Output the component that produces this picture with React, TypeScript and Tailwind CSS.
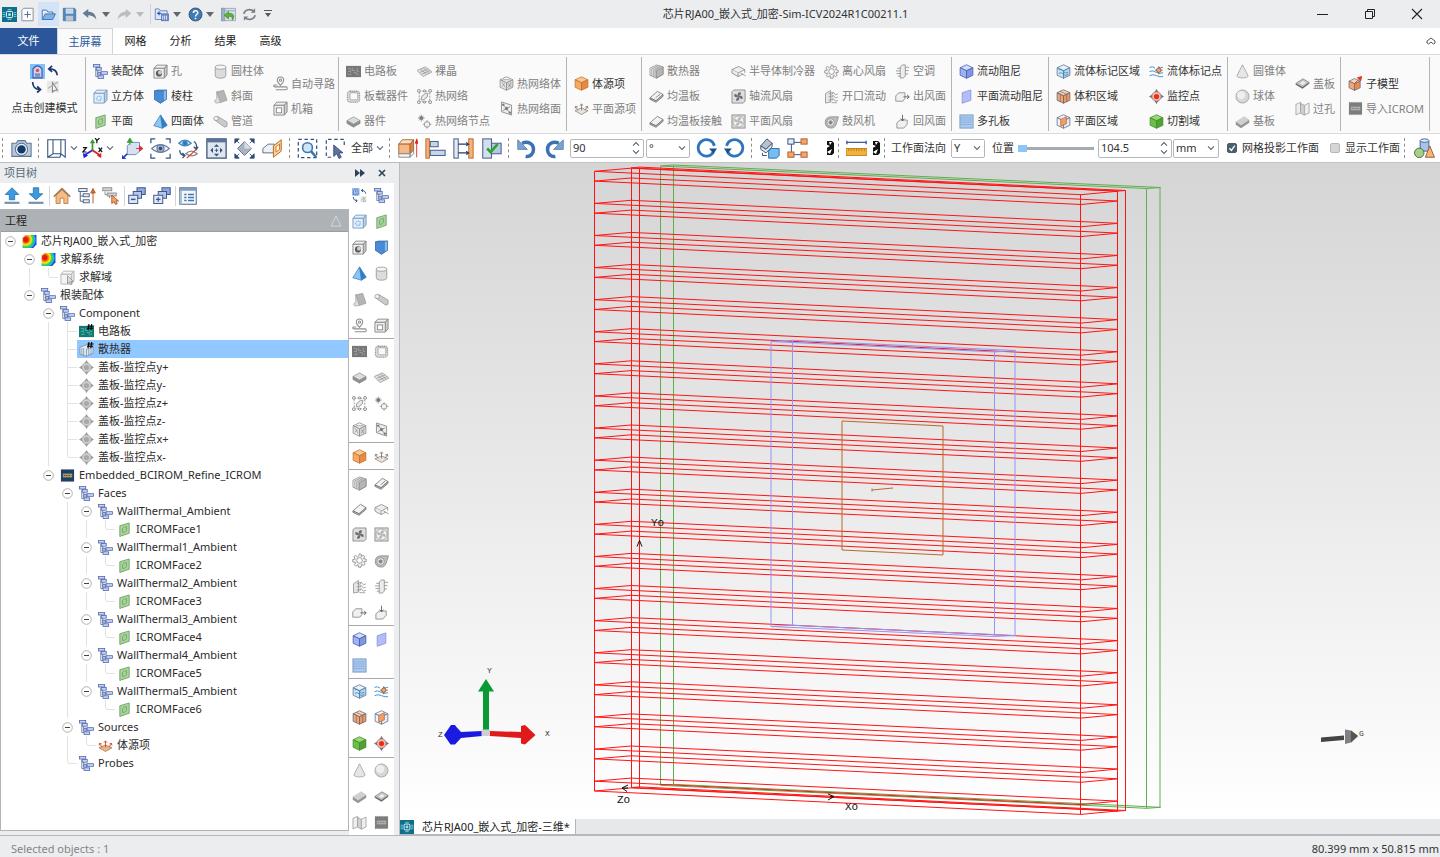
import React, { useState } from 'react';

// ---------------------------------------------------------------------------
// Icons
// ---------------------------------------------------------------------------

const GREY = '#8c8c8c';
const NAVY = '#33507f';

const cube = (top: string, left: string, right: string, stroke: string) => (
  <g stroke={stroke} strokeWidth="0.8" strokeLinejoin="round">
    <path d="M8 .8 14.8 4 8 7.2 1.2 4Z" fill={top} />
    <path d="M1.2 4 8 7.2V15.2L1.2 12Z" fill={left} />
    <path d="M14.8 4 8 7.2V15.2L14.8 12Z" fill={right} />
  </g>
);

const boxOutline = (stroke: string, face: string, side: string) => (
  <g stroke={stroke} strokeWidth="1" strokeLinejoin="round">
    <path d="M1 4.6 4 1.2H15L12 4.6Z" fill={face} />
    <path d="M12 4.6 15 1.2V11.6L12 15Z" fill={side} />
    <rect x="1" y="4.6" width="11" height="10.4" fill={face} />
  </g>
);

const assembly = (fill: string, stroke: string) => (
  <g>
    <path d="M3 4V13.4H7M5 6V8.8H9" fill="none" stroke="#6f7f9d" />
    <g fill={fill} stroke={stroke} strokeWidth="0.8">
      <rect x=".6" y=".6" width="6.6" height="2.6" />
      <rect x="3.4" y="3.8" width="5.4" height="2.8" />
      <rect x="8.6" y="8.2" width="6.8" height="2.8" />
      <rect x="4.8" y="9.4" width="3.4" height="2.4" />
      <rect x="5.4" y="12.6" width="6" height="2.8" />
    </g>
  </g>
);

const contour = (
  <g>
    <defs>
      <radialGradient id="contourFill" gradientUnits="userSpaceOnUse" cx="4" cy="6" r="12">
        <stop offset="0.18" stopColor="#e01b10" />
        <stop offset="0.34" stopColor="#f58a12" />
        <stop offset="0.48" stopColor="#f5ee1c" />
        <stop offset="0.64" stopColor="#35d63c" />
        <stop offset="0.8" stopColor="#18b4ea" />
        <stop offset="0.95" stopColor="#1738e0" />
      </radialGradient>
    </defs>
    <path d="M.6 4 4 1H15.4V11L12 15H.6Z" fill="url(#contourFill)" />
  </g>
);

const slab = (top: string, side: string) => (
  <g stroke={GREY} strokeWidth=".7" strokeLinejoin="round">
    <path d="M1 7 8 3 15 7 8 11Z" fill={top} />
    <path d="M1 7V10L8 14V11ZM15 7V10L8 14V11Z" fill={side} />
  </g>
);

const tiltedPlate = (
  <g stroke="#777" strokeWidth=".9" strokeLinejoin="round">
    <path d="M1 9.5 9 2.5 15 6 7.5 12.5Z" fill="#f3f3f3" />
    <path d="M1 9.5V11L7.5 14.2 15 7.8V6L7.5 12.5Z" fill="#b9b9b9" />
  </g>
);

const probe = (fill: string, dot: string, stroke: string) => (
  <g>
    <path d="M8 0 10.4 4H5.6ZM8 16 5.6 12H10.4ZM0 8 4 5.6V10.4ZM16 8 12 10.4V5.6Z" fill={stroke} />
    <circle cx="8" cy="8" r="5" fill={fill} stroke={stroke} strokeWidth=".8" />
    <circle cx="8" cy="8" r="2.8" fill={dot} />
  </g>
);

const fan = (
  <g fill="#6d6d6d">
    <path d="M8 8C6 5 8 3 10.5 3.6 11 5.4 9.6 6.6 8 8ZM8 8C11 6 13 8 12.4 10.5 10.6 11 9.4 9.6 8 8ZM8 8C10 11 8 13 5.5 12.4 5 10.6 6.4 9.4 8 8ZM8 8C5 10 3 8 3.6 5.5 5.4 5 6.6 6.4 8 8Z" />
  </g>
);

const chip = (bg: string, trace: string) => (
  <g>
    <rect x="0" y="2" width="16" height="12" fill={bg} />
    <path d="M2 5H5V8H2M7 4V7H10M12 4V8H14M2 11H6M8 9H11V12M13 10V12M5 9V10" fill="none" stroke={trace} strokeWidth=".8" />
  </g>
);

const romChip = (bg: string, label: string) => (
  <g>
    <rect x="1" y="1.5" width="14" height="13" fill={bg} />
    <path d="M1 1.5H15M1 14.5H15" stroke="#999" strokeDasharray="1 1" />
    <rect x="3" y="6" width="10" height="4" fill={label} />
    <path d="M4 8H12" stroke={bg} strokeDasharray="1.5 1" />
  </g>
);

const createMode = (
  <g>
    <rect x="0" y="0" width="8" height="8" fill="#7ec0fb" />
    <path d="M1.6 2.6Q4-.6 6.4 2.6V7.4H1.6Z" fill="#c9d3f2" stroke="#3f55a5" strokeWidth=".6" />
    <path d="M2.6 5.4H5.4M2.6 6.4H5.4" stroke="#3f55a5" strokeWidth=".5" />
    <circle cx="4" cy="3.4" r=".9" fill="#e14b42" />
    <path d="M14.5 6C14.4 3.8 12.8 2.6 10.2 2.6M11.8 1 10 2.6 11.8 4.2" fill="none" stroke="#173a70" strokeWidth=".9" />
    <path d="M1.4 9.6C1.4 12 2.8 13.6 5.2 13.6M3.8 12 5.6 13.6 3.8 15.2" fill="none" stroke="#173a70" strokeWidth=".9" />
    <path d="M9 9H15.4V15.2H9Z" fill="#e8e8e8" />
    <path d="M12 10V15L13 14H14.6Z" fill="#fff" stroke="#888" strokeWidth=".6" />
    <path d="M9.6 13 14.8 9.6" stroke="#aaa" strokeWidth=".6" />
  </g>
);

const source = (fill: string, arrow: string) => (
  <g>
    <path d="M1 10.4 8 7.4 15 10.4 8 14.4Z" fill={fill} stroke="#8a6a50" strokeWidth=".7" />
    <path d="M8 10V3.6M4.4 10 1.6 6M11.6 10 14.4 6M6.4 5 8 3 9.6 5M1.2 8 1.6 5.6 4 6.4M14.8 8 14.4 5.6 12 6.4" fill="none" stroke={arrow} strokeWidth=".9" />
  </g>
);

const ICONS: Record<string, React.ReactNode> = {
  assembly: assembly('#c3d2f6', '#4a62a8'),
  cuboid: (
    <g>
      {boxOutline('#7d9cc2', '#e2eefa', '#b9d2ec')}
      <path d="M4 9Q6 7 8.6 8V12H5Q3.4 11 4 9Z" fill="none" stroke="#3d8bd0" strokeWidth=".8" strokeDasharray="1.5 .8" />
    </g>
  ),
  plane: (
    <g>
      <path d="M3 4 13 1V12L3 15.4Z" fill="#a9d39c" stroke="#6e9c62" strokeWidth=".9" />
      <path d="M6 7Q8 4 10 5V9Q8 12 6 11Z" fill="none" stroke="#62a656" strokeWidth=".9" />
    </g>
  ),
  hole: (
    <g>
      {boxOutline('#8a8a8a', '#f0f0f0', '#c6c6c6')}
      <circle cx="6.4" cy="10" r="3.3" fill="#5b5b5b" />
      <circle cx="7.4" cy="9.2" r="2.1" fill="#cfcfcf" />
    </g>
  ),
  prism: (
    <g stroke="#3b72b3" strokeWidth=".7" strokeLinejoin="round">
      <path d="M1.6 2 4.6 1H14.4V11L8 15.2 1.6 11Z" fill="#5f9fe0" />
      <path d="M1.6 2H11L14.4 1V11L11 13Z" fill="#8bbcf0" />
      <path d="M1.6 2H11V13L8 15.2 1.6 11Z" fill="#4a8bd6" />
    </g>
  ),
  tetra: (
    <g stroke="#2d72b5" strokeWidth=".7" strokeLinejoin="round">
      <path d="M8 1 15.2 12 10 15.2Z" fill="#2f7fca" />
      <path d="M8 1 .8 12.5 10 15.2Z" fill="#8cc6f2" />
    </g>
  ),
  cylinder: (
    <g stroke="#8e8e8e" strokeWidth=".8">
      <path d="M2.4 3.4V12.6C2.4 16 13.6 16 13.6 12.6V3.4Z" fill="#dcdcdc" />
      <ellipse cx="8" cy="3.4" rx="5.6" ry="2.2" fill="#f5f5f5" />
    </g>
  ),
  slope: (
    <g stroke="#999" strokeWidth=".7">
      <path d="M4 3 11.4 1.4 15 12 8 14.4Z" fill="#b5b5b5" />
      <path d="M4 3 8 14.4 3 15 1.6 13 4 10Z" fill="#dcdcdc" />
    </g>
  ),
  pipe: (
    <g stroke="#8d8d8d" strokeWidth=".7">
      <path d="M1.4 6 5 2.6 15 8.6V13L12.4 14Z" fill="#cbcbcb" />
      <ellipse cx="3.4" cy="4.8" rx="2.6" ry="2.2" fill="#f0f0f0" />
    </g>
  ),
  route: (
    <g fill="none" stroke="#8d8d8d" strokeWidth="1.1">
      <path d="M8 10C5 7 4.6 5.4 4.6 4.4A3.4 3.4 0 0 1 11.4 4.4C11.4 5.4 11 7 8 10Z" />
      <circle cx="8" cy="4.4" r="1.2" />
      <path d="M4.6 9.5H2Q.8 9.5.8 10.6 .8 11.6 2 11.6H14Q15.2 11.6 15.2 13 15.2 14.6 14 14.6H3" />
    </g>
  ),
  enclosure: (
    <g>
      {boxOutline('#8a8a8a', '#efefef', '#d0d0d0')}
      <rect x="3.6" y="7.4" width="5.6" height="5.2" fill="#fff" stroke="#8a8a8a" />
    </g>
  ),
  pcb: chip('#777777', '#a8a8a8'),
  pcbColor: (
    <g>
      {chip('#137a72', '#56c3b5')}
      <path d="M10.6 0 9.6 6.6M13.6 0 12.6 6.6M9 2.2H15.6M8.6 4.6H15" stroke="#000" strokeWidth="1.1" />
    </g>
  ),
  board: (
    <g fill="none" stroke="#9a9a9a">
      <rect x="1.6" y="2.4" width="12.8" height="11.6" rx="3" fill="#e4e4e4" strokeDasharray="1.4 .6" strokeWidth="1.4" />
      <rect x="4.2" y="4" width="8.4" height="7.6" rx="1" fill="#f9f9f9" strokeWidth=".9" />
    </g>
  ),
  device: slab('#dcdcdc', '#8f8f8f'),
  die: (
    <g stroke="#8d8d8d" strokeWidth=".7" fill="#e2e2e2">
      <path d="M0 7 9 3 16 8.6 6.4 13.4Z" />
      <path d="M3 9 12 5M4.6 11 14 7M3.6 5.4 10.4 11M6.6 4 13 10" fill="none" />
    </g>
  ),
  network: (
    <g fill="#e9e9e9" stroke="#7f7f7f" strokeWidth=".8">
      <rect x="2.4" y="2.4" width="11.2" height="11.2" strokeDasharray="2 1.2" fill="none" />
      <path d="M4.4 11.6 5 8 9 4.6H11.6L11 8.4 7 11.6Z" />
      <circle cx="2" cy="2" r="1.6" /><circle cx="14" cy="2" r="1.6" />
      <circle cx="2" cy="14" r="1.6" /><circle cx="14" cy="14" r="1.6" />
      <circle cx="8" cy="2" r="1.2" /><circle cx="8" cy="14" r="1.2" />
    </g>
  ),
  networkNode: (
    <g stroke="#7f7f7f" strokeWidth=".8" fill="none">
      <path d="M4.6.6V8M1 4.3H8.2M2.2 1.8 7 6.8M7 1.8 2.2 6.8" />
      <circle cx="4.6" cy="4.3" r="1.6" fill="#777" />
      <rect x="8" y="8.4" width="5.4" height="5.4" rx="1.6" fill="#f2f2f2" />
      <path d="M10.7 6.6V8.4M10.7 13.8V15.6M6.2 11H8M13.4 11H15.4" />
    </g>
  ),
  networkBody: (
    <g>
      {cube('#f4f4f4', '#e6e6e6', '#d4d4d4', '#888')}
      <path d="M3 6 6.4 12M6.4 8 3 11M10 8 13 12M13 7 10 12M4 4H12" stroke="#888" strokeWidth=".7" />
    </g>
  ),
  networkFace: (
    <g stroke="#777" strokeWidth=".8" fill="#eee">
      <path d="M2.6 1 13.4 4.4V15L2.6 11.4Z" />
      <path d="M4 3.4 12 13M11.8 6 4 10.4" />
      <circle cx="8" cy="8" r="1.3" fill="#777" />
      <circle cx="4.6" cy="4" r=".9" fill="#777" /><circle cx="11.6" cy="12.4" r=".9" fill="#777" />
    </g>
  ),
  sourceBody: cube('#fbc68f', '#f5a962', '#e98a44', '#c0702f'),
  sourceFace: source('#e4e4e4', '#777'),
  sourceFaceColor: source('#f3b57c', '#c63c28'),
  heatsink: (
    <g stroke="#7f7f7f" strokeWidth=".7" strokeLinejoin="round">
      <path d="M1 4.4 8 1 15 3V11L8 15.2 1 12Z" fill="#ededed" />
      <path d="M3 5.2 9.8 1.8M3 5.2V12.8M5 6 11.6 2.4M5 6V13.8M6.6 6.4 13 3M6.6 6.4V14.4" fill="none" />
      <path d="M8 7V15L15 11V3.2Z" fill="#b5b5b5" />
    </g>
  ),
  heatsinkSel: (
    <g stroke="#6d7f92" strokeWidth=".7" strokeLinejoin="round">
      <path d="M1 5.4 8 3 15 5V12L8 15.2 1 13Z" fill="#dde9f6" />
      <path d="M3 6V13.6M5 6.6V14.4M8 7.6V15M8 7.6 15 5.4M10.4 7V14M12.8 6.2V13" fill="none" />
      <path d="M10.6 0 9.6 6.6M13.6 0 12.6 6.6M9 2.2H15.6M8.6 4.6H15" stroke="#000" strokeWidth="1.1" />
    </g>
  ),
  vaporChamber: (
    <g>
      {tiltedPlate}
      <path d="M7 9.4 12 5.4M9.6 10.4 13 7.4" stroke="#888" />
    </g>
  ),
  vaporContact: tiltedPlate,
  tec: (
    <g stroke="#7f7f7f" strokeWidth=".8" fill="#eee" strokeLinejoin="round">
      <path d="M1 6 8 2.6 14.6 6 7.6 9.6Z" />
      <path d="M1 6V9.6L7.6 13.4V9.6M14.6 6V9.4M7.6 13.4 12.6 10.8M10 9.6 15.6 12.6" />
    </g>
  ),
  axialFan: (
    <g>
      <path d="M1 3 3 1H15V13L13 15H1Z" fill="#dedede" stroke="#777" strokeWidth=".8" />
      {fan}
    </g>
  ),
  planeFan: (
    <g>
      <rect x="1" y="1" width="14" height="14" fill="#dadada" stroke="#888" strokeWidth=".9" />
      <circle cx="8" cy="8" r="5.8" fill="#f3f3f3" stroke="#999" strokeWidth=".7" />
      <g opacity=".45">{fan}</g>
    </g>
  ),
  centrifugal: (
    <g fill="#f2f2f2" stroke="#8d8d8d" strokeWidth=".9" strokeLinejoin="round">
      <path d="M7 3.4 8 .8 10 1.6 9.8 3.8 12.4 2.4 13.6 4 12.2 6 15.2 6.6V9L12.6 9.2 14 12 12.4 13.4 10.2 12 9.6 15.2H7L6.6 12.6 4 14 2.4 12.4 4 10 .8 9.6V7L3.4 6.6 2 4 3.8 2.6 5.8 4Z" />
      <circle cx="8" cy="8" r="3" fill="#fff" />
    </g>
  ),
  opening: (
    <g fill="none" stroke="#8a8a8a" strokeWidth=".8">
      <path d="M1.6 5 7 1.6V14L1.6 15Z" fill="#e6e6e6" />
      <path d="M5 5 10 3.6 12 6 14.6 5.4M5 8.4 10 7 12 9.4 14.6 8.8M5 12 10 10.4 12 13 15 12M8 14.6H14M10 3.6 8 6.4M10 7 8 9.6M10 10.4 8 13" />
    </g>
  ),
  blower: (
    <g stroke="#888" strokeWidth=".8">
      <path d="M7 3H15.4L13 11A6 6 0 1 1 7 3Z" fill="#bdbdbd" />
      <circle cx="7" cy="9" r="4" fill="#eee" />
      <circle cx="7" cy="9" r="1.9" fill="#888" />
    </g>
  ),
  aircon: (
    <g fill="none" stroke="#8f8f8f" strokeWidth=".9">
      <path d="M5.6 3 8 1H11V13L8.6 15H5.6Z" fill="#ececec" />
      <path d="M5.6 4.6H2.4M5.6 7.4H1M5.6 10.2H1.6M5.6 13H3M11 4Q13 2.6 15 4M11 7.4Q13 6 14.6 7.4M11 11Q13 9.6 14 11" />
    </g>
  ),
  outlet: (
    <g stroke="#8a8a8a" strokeWidth=".9" fill="#f0f0f0">
      <path d="M.8 7.4 4 4H10.6V10L8.4 13H.8Z" />
      <path d="M9 8.4H15M12.8 6.2 15.2 8.4 12.8 10.6" fill="none" stroke="#555" />
    </g>
  ),
  inlet: (
    <g stroke="#8a8a8a" strokeWidth=".9" fill="#f0f0f0">
      <path d="M2 9.4 5.6 6.4H13V11L9.4 15H2Z" />
      <path d="M8 .8V7M6 5 8 7.4 10 5" fill="none" stroke="#555" />
    </g>
  ),
  resistance: cube('#d3dcfb', '#9fb2f2', '#8095e4', '#4358a8'),
  planeResistance: <path d="M3.4 4 12.6 1V12L3.4 15.2Z" fill="#b4bdfb" stroke="#8894d8" strokeWidth=".9" />,
  perforated: (
    <g>
      <rect x="1" y="1" width="14" height="14" fill="#a9c9ee" stroke="#7c9ac0" />
      <path d="M2 4H14M2 6.4H14M2 8.8H14M2 11.2H14" stroke="#6c94c8" strokeWidth="1" strokeDasharray="1 1" />
    </g>
  ),
  fluidRegion: (
    <g>
      {cube('#e8f2fb', '#cfe3f5', '#b5d3ee', '#53708f')}
      <path d="M3 6Q6 5 8 8T13 9M3 10Q6 8 8 11T13 11" fill="none" stroke="#2b8cc9" strokeWidth=".9" />
    </g>
  ),
  volumeRegion: (
    <g>
      {cube('#fbd4b4', '#f3a774', '#ec9860', '#54607c')}
      <path d="M4.6 5.8V13.6M11.4 5.8V13.4M4.4 2.6 11.4 5.6" stroke="#8a5b48" strokeWidth=".7" />
    </g>
  ),
  planeRegion: (
    <g>
      {cube('#f5f8fd', '#eef2fa', '#e3e9f5', '#5c6a88')}
      <path d="M5 5.6 11 2.8V10.4L5 13.2Z" fill="#f0a06c" stroke="#b45c26" strokeWidth=".7" />
    </g>
  ),
  fluidPoint: (
    <g fill="none" stroke="#3f8fc9">
      <path d="M.6 3.6Q4 2 6.4 4.4M.6 8Q4 6.4 7 8.6T15 9.4M.6 12.4Q4 10.4 8 12.4T15 13.4M10 3.6Q12 4.6 15 3.4" />
      <circle cx="10.4" cy="6.6" r="2.4" fill="#f5a571" stroke="#7d4630" strokeWidth=".8" />
      <path d="M10.4 2.4V4M10.4 9.2V11M6.4 6.6H8M12.8 6.6H14.6" stroke="#7d4630" strokeWidth=".8" />
    </g>
  ),
  monitor: probe('#f4c3a4', '#ef2d1c', '#7a6a80'),
  monitorGrey: probe('#cfcfcf', '#a9a9a9', '#9a9a9a'),
  cutRegion: cube('#9ad877', '#6abf46', '#4fa332', '#3f8529'),
  cone: <path d="M8 .8 14 12.6C14 15.6 2 15.6 2 12.6Z" fill="#e6e6e6" stroke="#9a9a9a" strokeWidth=".8" />,
  sphere: (
    <g>
      <circle cx="8" cy="8" r="7" fill="#d6d6d6" stroke="#9a9a9a" strokeWidth=".8" />
      <circle cx="6.6" cy="6.4" r="4.4" fill="#efefef" />
    </g>
  ),
  substrate: (
    <g strokeLinejoin="round">
      <path d="M.8 8 10 2.4 15.2 6 6.4 12Z" fill="#d0d0d0" />
      <path d="M.8 8V11.4L6.4 15.2V12ZM15.2 6V9.4L6.4 15.2V12Z" fill="#969696" />
    </g>
  ),
  cover: (
    <g strokeLinejoin="round">
      <path d="M.8 8 8.4 3 15.2 6.8 8 12Z" fill="#c3c3c3" stroke="#777" strokeWidth=".7" />
      <path d="M.8 8V9.4L8 13.6 15.2 8.2V6.8L8 12Z" fill="#666" />
      <path d="M5 7.8 8.6 5.4 11.6 7.2 8 9.6Z" fill="#eee" />
    </g>
  ),
  via: (
    <g stroke="#999" strokeWidth=".8" strokeLinejoin="round">
      <path d="M1 3.6 6 1.4V12.6L1 14.8Z" fill="#eee" />
      <path d="M6 2.6 10 4.6V15L6 13Z" fill="#d3d3d3" />
      <path d="M10 4.6 15 2.2V12.8L10 15Z" fill="#eee" />
    </g>
  ),
  submodel: (
    <g>
      <g transform="translate(0 2) scale(.88)">{cube('#fbd4b4', '#f3a774', '#ec8d50', '#54607c')}</g>
      <path d="M7.4 7.6 11 4M10 1.8 14.6.6 13.4 5.2Z" fill="#d23e22" stroke="#d23e22" />
    </g>
  ),
  romGrey: romChip('#7d7d7d', '#adadad'),
  rom: romChip('#1d3f6e', '#b8a14a'),
  contour,
  domain: (
    <g>
      {boxOutline('#b5b5b5', '#f4f4f4', '#e2e2e2')}
      <path d="M8 6V14.6L10 12.8 11.4 15.6 13 14.8 11.6 12.2H14.2Z" fill="#ddd" stroke="#888" strokeWidth=".8" />
    </g>
  ),
  createMode,
};

// 24-unit icons of the title bar and the view toolbar
const TOOLS: Record<string, React.ReactNode> = {
  app: (
    <g>
      <rect width="24" height="24" fill="#0e6f8c" />
      <rect x="7" y="7" width="10" height="10" rx="2" fill="none" stroke="#fff" strokeWidth="1.6" />
      <circle cx="12" cy="12" r="2.4" fill="#9fe0ee" />
      <path d="M1 9H5M1 12H5M1 15H5M19 9H23M19 12H23M19 15H23M9 4H15M9 20H15" stroke="#7fd4e6" strokeWidth="1.4" />
    </g>
  ),
  new: (
    <g fill="#fafafa" stroke="#8a94a3" strokeWidth="1.6">
      <path d="M3 5 6 2H21V22H3Z" />
      <path d="M12 7V17M7 12H17" stroke="#59728f" />
    </g>
  ),
  open: (
    <g stroke="#3b6ca3" strokeWidth="1.4" strokeLinejoin="round">
      <path d="M2 20V5H9L11 8H19V11" fill="#e6effa" />
      <path d="M2 20 6.6 11H23L18.6 20Z" fill="#7fb2e6" />
    </g>
  ),
  save: (
    <g>
      <path d="M2 2H20L22 4V22H2Z" fill="#4f86bd" stroke="#3c6690" />
      <rect x="6" y="2.6" width="12" height="8" fill="#e6eef6" />
      <rect x="6" y="14" width="12" height="8" fill="#b9c6d4" />
      <path d="M7 5H17M7 8H17" stroke="#8aa4bf" />
    </g>
  ),
  undo: <path d="M1 10 10 3V7.4C17 7.4 22 11 23 20 19 15 15 13 10 13V17.4Z" fill="#667a96" />,
  redo: <path d="M23 10 14 3V7.4C7 7.4 2 11 1 20 5 15 9 13 14 13V17.4Z" fill="#b9bcc0" />,
  run: (
    <g stroke="#5872a6" strokeWidth="1.2" fill="#dbe5f7">
      <path d="M2 20V3H8L10 6H21V20Z" />
      <rect x="12" y="11" width="11" height="11" fill="#6f8bd0" />
      <path d="M5 10H11M8 7V13" stroke="#2b56b3" strokeWidth="2" />
      <path d="M14 20V14M17 20V14M20 20V14" stroke="#fff" />
    </g>
  ),
  help: (
    <g>
      <circle cx="12" cy="12" r="10.4" fill="#3e7cb4" stroke="#2d4c6c" strokeWidth="1.4" />
      <path d="M8.6 9.4C8.6 5 15.6 5 15.6 9.2 15.6 12 12 12 12 15M12 17V19.4" fill="none" stroke="#fff" strokeWidth="2.4" />
    </g>
  ),
  revert: (
    <g>
      <rect x="1" y="2" width="22" height="20" fill="#d6dde6" stroke="#8392a5" />
      <path d="M1 2H6V22H1ZM6 6H23" fill="#9fb0c4" stroke="#8392a5" />
      <path d="M18 21C24 13 18 9 12 10.6V7L5 13 12 19V15.6C16 14 19 16 18 21Z" fill="#59b23c" stroke="#3c8426" />
    </g>
  ),
  refresh: (
    <g fill="none" stroke="#7b7f84" strokeWidth="2.6">
      <path d="M3 11C4 4 14 2 19 7M21 13C20 20 10 22 5 17" />
      <path d="M21 2V9H14ZM3 22V15H10Z" fill="#7b7f84" stroke="none" />
    </g>
  ),
  camera: (
    <g>
      <path d="M1 6H6L8 3H16L18 6H23V21H1Z" fill="#b9c9da" stroke="#5f7897" strokeWidth="1.2" />
      <circle cx="12" cy="13" r="7" fill="#e8eef5" stroke="#3f5878" />
      <circle cx="12" cy="13" r="4.8" fill="#123a6b" />
    </g>
  ),
  view: (
    <g fill="none" stroke={NAVY} strokeWidth="1.2">
      <path d="M2 2H22V22L17 18H8L2 22ZM8 2V18M17 2V18M2 22H16L17 18" />
    </g>
  ),
  axes: (
    <g fill="none" strokeWidth="2">
      <path d="M12 14V4" stroke="#2ba02b" /><path d="M9 6 12 1 15 6Z" fill="#2ba02b" />
      <path d="M12 14 2 20" stroke="#2222e0" /><path d="M1 17 2 23 7 20Z" fill="#2222e0" />
      <path d="M12 14 21 20" stroke="#e02020" /><path d="M17 20 22 23V17Z" fill="#e02020" />
      <path d="M15 0 17 3 20 0M17 3V6M1 11H5L1 16H5M19 11 23 16M23 11 19 16" stroke="#111" strokeWidth="1.4" />
    </g>
  ),
  triadBox: (
    <g>
      <path d="M6 9 10 5H20V15L16 19H6Z" fill="#d6e2f3" stroke="#6a83a8" />
      <path d="M6 18 1 23" stroke="#2a40d0" strokeWidth="2" />
      <path d="M0 19V24H5Z" fill="#2a40d0" />
      <path d="M9 8V2M6 5 9 0 12 5Z" stroke="#35a335" fill="#35a335" />
      <path d="M16 12H21M20 9 24 12 20 15Z" stroke="#e02d2d" fill="#e02d2d" />
    </g>
  ),
  eye: (
    <g fill="none" stroke={NAVY} strokeWidth="1.4">
      <path d="M1 6V1H6M18 1H23V6M23 18V23H18M6 23H1V18" />
      <path d="M2 12Q12 3 22 12 12 21 2 12Z" fill="#eef3fa" stroke="#667da0" />
      <circle cx="12" cy="12" r="4" fill="#b9c6d8" stroke="#667da0" /><circle cx="12" cy="12" r="1.6" fill={NAVY} />
    </g>
  ),
  hide: (
    <g fill="none" stroke="#3f86c2" strokeWidth="1.5">
      <path d="M1 6Q8-1 15 6 8 12 1 6Z" fill="#d8ecfa" /><circle cx="8" cy="6" r="2.4" fill="#1e78bd" />
      <path d="M18 4Q22 6 21 12M23 10 21 13 18 10M2 14Q2 19 7 20M5 17 8 20 5 23" stroke={NAVY} />
      <path d="M9 18Q15 12 22 18 16 23 9 18Z" stroke="#888" /><path d="M10 23 21 13" stroke="#e03b3b" />
    </g>
  ),
  fit: (
    <g>
      <rect x="1" y="1" width="22" height="22" fill="#dfe6ef" stroke="#44597a" strokeWidth="1.5" />
      <path d="M1 1H23V5H1Z" fill="#5b7397" />
      <path d="M12 7 15 10H9ZM12 21 9 18H15ZM5 14 8 11V17ZM19 14 16 17V11Z" fill={NAVY} />
      <path d="M10 14H14M12 12V16" stroke={NAVY} />
    </g>
  ),
  zoomAll: (
    <g>
      <path d="M12 4 20 12 12 20 4 12Z" fill="#a9b4c2" stroke="#5a6a80" />
      <path d="M12 4 20 12H12Z" fill="#d8dee6" />
      <path d="M1 1H6L1 6ZM23 1V6L18 1ZM1 23V18L6 23ZM23 23H18L23 18ZM2 2 6 6M22 2 18 6M2 22 6 18M22 22 18 18" fill="#2f4c79" stroke="#2f4c79" />
    </g>
  ),
  clip: (
    <g stroke="#5f6f86" strokeWidth="1.1">
      <path d="M1 12 7 7H14V17H1Z" fill="#eef1f5" />
      <path d="M13 9 22 2V15L13 22Z" fill="#f9cf94" stroke="#b0702a" />
      <path d="M16 10 20 7V13L16 16Z" fill="#fff" stroke="#d07b1c" />
    </g>
  ),
  zoomWindow: (
    <g fill="none">
      <rect x="1.5" y="1.5" width="21" height="21" stroke={NAVY} strokeWidth="1.4" strokeDasharray="4 3" />
      <circle cx="12" cy="11" r="5.6" fill="#cfe6fa" stroke="#3a78b5" strokeWidth="1.8" />
      <path d="M16 15 22 22" stroke="#3a78b5" strokeWidth="3" />
    </g>
  ),
  select: (
    <g fill="none">
      <path d="M22 8V1.5H1.5V22H9" stroke={NAVY} strokeWidth="1.4" strokeDasharray="4 3" />
      <path d="M10 8V21L13.4 18 16 23.4 18.6 22 16 17H20.6Z" fill="#5d7496" stroke={NAVY} />
    </g>
  ),
  extrude: (
    <g stroke="#a35f2b" strokeWidth="1">
      <path d="M2 7 6 2H19L15 7Z" fill="#fbe0c6" />
      <path d="M2 7H15V18H2Z" fill="#f4b985" />
      <path d="M15 7 19 2V14L15 18Z" fill="#dd8747" />
      <path d="M2 18H15V22H2ZM15 18 19 14V18L15 22Z" fill="#f1f1f1" stroke="#888" />
      <path d="M22.5 22V3M21 6 22.5 1 24 6Z" stroke="#e02020" fill="#e02020" />
    </g>
  ),
  alignLeft: (
    <g strokeWidth="1.2">
      <rect x="1" y="1" width="4" height="22" fill="#f5b37b" stroke="#c1713a" />
      <rect x="6" y="4" width="9" height="6" fill="#c9d6ea" stroke="#4b638f" />
      <rect x="6" y="14" width="17" height="6" fill="#c9d6ea" stroke="#4b638f" />
    </g>
  ),
  distance: (
    <g strokeWidth="1.2">
      <rect x="1" y="1" width="5" height="22" fill="#e5ebf4" stroke="#4b638f" />
      <rect x="18" y="1" width="5" height="22" fill="#f5b37b" stroke="#c1713a" />
      <path d="M6 7H18M6 17H18M15 5 18 7 15 9M15 15 18 17 15 19" fill="none" stroke="#1e3e74" />
    </g>
  ),
  check: (
    <g strokeWidth="1.2">
      <rect x="2" y="1" width="10" height="22" fill="#d4deed" stroke="#4b638f" />
      <rect x="12" y="6" width="11" height="12" fill="#b7c8e4" stroke="#4b638f" />
      <path d="M7 12 11 16 19 7" fill="none" stroke="#2fa32f" strokeWidth="3" />
    </g>
  ),
  rotateLeft: (
    <g><path d="M7 6C14 3 20 7 20 13 20 18 16 22 11 21" fill="none" stroke="#3c72ae" strokeWidth="4" /><path d="M2 2V13H13Z" fill="#7aa3cf" stroke="#5784b5" /></g>
  ),
  rotateRight: (
    <g><path d="M17 6C10 3 4 7 4 13 4 18 8 22 13 21" fill="none" stroke="#3c72ae" strokeWidth="4" /><path d="M22 2V13H11Z" fill="#7aa3cf" stroke="#5784b5" /></g>
  ),
  spinCw: (
    <g><path d="M20 16A9.4 9.4 0 1 1 21 9" fill="none" stroke="#2f74bf" strokeWidth="3.2" /><path d="M15 12H24L20 18Z" fill="#174f91" /></g>
  ),
  spinCcw: (
    <g><path d="M4 16A9.4 9.4 0 1 0 3 9" fill="none" stroke="#2f74bf" strokeWidth="3.2" /><path d="M9 12H0L4 18Z" fill="#174f91" /></g>
  ),
  transform: (
    <g strokeWidth="1.1">
      <path d="M2 9 9 1 15 6 8 13Z" fill="#b6c2d2" stroke="#44546b" /><path d="M2 9V13L8 17 15 10V6L8 13Z" fill="#e2e7ee" stroke="#44546b" />
      <path d="M11 15 14 12H23V20L20 23H11Z" fill="#79bdf0" stroke="#2770b0" />
      <path d="M4 17V20H9" fill="none" stroke={NAVY} />
    </g>
  ),
  pattern: (
    <g strokeWidth="1.1">
      <path d="M19 5H5V19H19" fill="none" stroke={NAVY} />
      <rect x="1" y="1" width="7" height="6" fill="#e8edf5" stroke={NAVY} />
      <rect x="16" y="1" width="7" height="6" fill="#f5a571" stroke="#b3602a" />
      <rect x="1" y="16" width="7" height="6" fill="#f5a571" stroke="#b3602a" />
      <rect x="16" y="16" width="7" height="6" fill="#f5a571" stroke="#b3602a" />
    </g>
  ),
  ruler: (
    <g>
      <path d="M1 5H23M1 3V7M23 3V7" stroke="#3d5c91" strokeWidth="1.6" />
      <rect x="0" y="12" width="24" height="8" fill="#f4b13c" stroke="#c27d18" />
      <path d="M3 12V15M6 12V15M9 12V15M12 12V15M15 12V15M18 12V15M21 12V15" stroke="#a5701d" strokeWidth=".8" />
    </g>
  ),
  shapes: (
    <g strokeWidth="1.1">
      <path d="M7 3V15H17V3Z" fill="#a9c2ea" stroke="#45639a" /><ellipse cx="12" cy="3" rx="5" ry="2" fill="#dce7f8" stroke="#45639a" />
      <circle cx="6" cy="17" r="5.4" fill="#a4d08a" stroke="#4c6f3a" />
      <path d="M18 9 23.4 22H13Z" fill="#f6b57b" stroke="#9e5c2b" />
    </g>
  ),
  up: (
    <g><path d="M12 1 21 10H15.6V17H8.4V10H3Z" fill="#3b9be0" stroke="#2168a3" /><rect x="2" y="19.6" width="20" height="3" fill="#7d93ad" /></g>
  ),
  down: (
    <g><path d="M12 17 3 9H8.4V1H15.6V9H21Z" fill="#3b9be0" stroke="#2168a3" /><rect x="2" y="19.6" width="20" height="3" fill="#7d93ad" /></g>
  ),
  home: (
    <g strokeLinejoin="round"><path d="M4 11V22H9.6V15H14.4V22H20V11L12 4Z" fill="#f5bb82" stroke="#b2713b" /><path d="M1 13 12 2 23 13" fill="none" stroke="#99754f" strokeWidth="2" /></g>
  ),
  treeUp: (
    <g fill="#e8edf5" stroke="#56688a" strokeWidth="1.3">
      <path d="M3 5V19H8M3 12H8" fill="none" /><rect x="1" y="2" width="11" height="4" /><rect x="7" y="9" width="8" height="4" /><rect x="7" y="17" width="8" height="4" />
      <path d="M20 22V6M17 8 20 2 23 8Z" fill="#e08542" stroke="#b9561d" />
    </g>
  ),
  treePick: (
    <g fill="#d3d3d3" stroke="#8a8a8a" strokeWidth="1.2">
      <path d="M4 6V10H9M10 12V15" fill="none" /><rect x="1" y="1" width="12" height="4" /><rect x="7" y="8" width="12" height="4" />
      <path d="M13 11V22L16 19.6 18 23.4 20.4 22 18.6 18.6H22Z" fill="#f3a46b" stroke="#b2541d" />
    </g>
  ),
  collapse: (
    <g stroke="#3f578a" strokeWidth="1.3"><rect x="12" y="1" width="11" height="9" fill="#8da8de" /><rect x="7" y="6" width="11" height="9" fill="#b4c7ee" /><rect x="1" y="11" width="12" height="11" fill="#dfe8f8" /><path d="M4 16.5H10" strokeWidth="2" /></g>
  ),
  expand: (
    <g stroke="#3f578a" strokeWidth="1.3"><rect x="12" y="1" width="11" height="9" fill="#8da8de" /><rect x="7" y="6" width="11" height="9" fill="#b4c7ee" /><rect x="1" y="11" width="12" height="11" fill="#dfe8f8" /><path d="M4 16.5H10M7 13.5V19.5" strokeWidth="1.6" /></g>
  ),
  properties: (
    <g><rect x="1" y="1" width="22" height="22" fill="#f2f7fc" stroke="#5b7391" strokeWidth="1.4" /><rect x="1" y="1" width="22" height="4" fill="#7d9cc0" /><rect x="1" y="5" width="3" height="18" fill="#a9c0d9" /><path d="M7 10H10M12 10H20M7 14H10M12 14H20M7 18H10M12 18H20" stroke="#3f78ab" strokeWidth="2" /></g>
  ),
};

interface IconProps {
  name: string;
  className?: string;
}

const Icon: React.FC<IconProps> = ({ name, className = 'w-[15px] h-[15px]' }) => (
  <svg viewBox="0 0 16 16" className={`${className} shrink-0`} aria-hidden="true">
    {ICONS[name]}
  </svg>
);

const ToolIcon: React.FC<IconProps> = ({ name, className = 'w-[22px] h-[22px]' }) => (
  <svg viewBox="0 0 24 24" className={`${className} shrink-0`} aria-hidden="true">
    {TOOLS[name]}
  </svg>
);

const Chevron: React.FC<{ className?: string }> = ({ className = '' }) => (
  <svg viewBox="0 0 8 8" className={`w-2 h-2 shrink-0 ${className}`} fill="none" stroke="#5a6772" strokeWidth="1.1" aria-hidden="true">
    <path d="M1 2.4 4 5.4 7 2.4" />
  </svg>
);

// ---------------------------------------------------------------------------
// Title bar and tabs
// ---------------------------------------------------------------------------

const Caret = ({ muted = false }: { muted?: boolean }) => (
  <svg viewBox="0 0 8 5" className="w-2 h-[5px] shrink-0" fill={muted ? '#b8babd' : '#63676c'} aria-hidden="true">
    <path d="M0 0H8L4 5Z" />
  </svg>
);

const QuickButton: React.FC<{ name: string; label: string; className?: string }> = ({ name, label, className = '' }) => (
  <button aria-label={label} className={`w-[21px] h-6 flex items-center justify-center ${className}`}>
    <ToolIcon name={name} className="w-[15px] h-[15px]" />
  </button>
);

const TitleBar = () => (
  <header className="h-7 flex items-center bg-[#ebedef]">
    <div className="flex items-center w-[272px] shrink-0">
      <ToolIcon name="app" className="w-[15px] h-[15px] ml-[2px]" />
      <QuickButton name="new" label="新建" />
      <QuickButton name="open" label="打开" className="bg-[#d3e4f8]" />
      <QuickButton name="save" label="保存" />
      <QuickButton name="undo" label="撤销" />
      <span className="flex w-[14px] pl-[2px]"><Caret /></span>
      <QuickButton name="redo" label="重做" />
      <span className="flex w-[15px] pl-px"><Caret muted /></span>
      <span className="h-5 w-px bg-[#d0d2d5]" />
      <QuickButton name="run" label="运行" />
      <span className="flex w-[13px] pl-px"><Caret /></span>
      <QuickButton name="help" label="帮助" />
      <span className="flex w-[13px] pl-px"><Caret /></span>
      <QuickButton name="revert" label="还原" />
      <QuickButton name="refresh" label="刷新" />
      <svg viewBox="0 0 8 8" className="w-2 h-2 ml-1 shrink-0" fill="#55595e" aria-hidden="true">
        <path d="M0 0H8V1H0ZM1 3H7L4 7Z" />
      </svg>
    </div>
    <h1 className="flex-1 text-center text-[11px] text-[#333]">芯片RJA00_嵌入式_加密-Sim-ICV2024R1C00211.1</h1>
    <div className="flex">
      <button aria-label="最小化" className="w-[47px] h-7 flex items-center justify-center">
        <span className="w-[11px] h-px bg-[#222]" />
      </button>
      <button aria-label="还原窗口" className="w-[47px] h-7 flex items-center justify-center">
        <svg viewBox="0 0 12 12" className="w-3 h-3" fill="none" stroke="#222">
          <path d="M1.5 3.5H8.5V10.5H1.5ZM3.5 3.5V1.5H10.5V8.5H8.5" />
        </svg>
      </button>
      <button aria-label="关闭" className="w-[47px] h-7 flex items-center justify-center">
        <svg viewBox="0 0 12 12" className="w-3 h-3" fill="none" stroke="#222" strokeWidth="1.1">
          <path d="M1 1 11 11M11 1 1 11" />
        </svg>
      </button>
    </div>
  </header>
);

const MENU_TABS = ['网格', '分析', '结果', '高级'];

const MenuTabs = () => (
  <nav className="h-[26px] flex items-stretch bg-white text-[11px] text-[#222]">
    <button className="w-[57px] bg-[#2b579a] text-white">文件</button>
    <button className="w-14 border-x border-t border-[#d2d4d6] bg-[#fafafa] text-[#2b579a]">主屏幕</button>
    {MENU_TABS.map(tab => (
      <button key={tab} className="w-[45px]">{tab}</button>
    ))}
    <button aria-label="折叠功能区" className="ml-auto w-[19px] flex items-center justify-center">
      <svg viewBox="0 0 10 8" className="w-[10px] h-2" fill="none" stroke="#555">
        <path d="M1 4 5 1 9 4V6L7.4 7 5 5 2.6 7 1 6Z" />
      </svg>
    </button>
  </nav>
);

// ---------------------------------------------------------------------------
// Ribbon
// ---------------------------------------------------------------------------

interface RibbonItem {
  icon: string;
  label: string;
  on?: boolean;
}

const RIBBON: RibbonItem[][][] = [
  [
    [{ icon: 'assembly', label: '装配体', on: true }, { icon: 'cuboid', label: '立方体', on: true }, { icon: 'plane', label: '平面', on: true }],
    [{ icon: 'hole', label: '孔' }, { icon: 'prism', label: '棱柱', on: true }, { icon: 'tetra', label: '四面体', on: true }],
    [{ icon: 'cylinder', label: '圆柱体' }, { icon: 'slope', label: '斜面' }, { icon: 'pipe', label: '管道' }],
    [{ icon: 'route', label: '自动寻路' }, { icon: 'enclosure', label: '机箱' }],
  ],
  [
    [{ icon: 'pcb', label: '电路板' }, { icon: 'board', label: '板载器件' }, { icon: 'device', label: '器件' }],
    [{ icon: 'die', label: '裸晶' }, { icon: 'network', label: '热网络' }, { icon: 'networkNode', label: '热网络节点' }],
    [{ icon: 'networkBody', label: '热网络体' }, { icon: 'networkFace', label: '热网络面' }],
  ],
  [
    [{ icon: 'sourceBody', label: '体源项', on: true }, { icon: 'sourceFace', label: '平面源项' }],
  ],
  [
    [{ icon: 'heatsink', label: '散热器' }, { icon: 'vaporChamber', label: '均温板' }, { icon: 'vaporContact', label: '均温板接触' }],
    [{ icon: 'tec', label: '半导体制冷器' }, { icon: 'axialFan', label: '轴流风扇' }, { icon: 'planeFan', label: '平面风扇' }],
    [{ icon: 'centrifugal', label: '离心风扇' }, { icon: 'opening', label: '开口流动' }, { icon: 'blower', label: '鼓风机' }],
    [{ icon: 'aircon', label: '空调' }, { icon: 'outlet', label: '出风面' }, { icon: 'inlet', label: '回风面' }],
  ],
  [
    [{ icon: 'resistance', label: '流动阻尼', on: true }, { icon: 'planeResistance', label: '平面流动阻尼', on: true }, { icon: 'perforated', label: '多孔板', on: true }],
  ],
  [
    [{ icon: 'fluidRegion', label: '流体标记区域', on: true }, { icon: 'volumeRegion', label: '体积区域', on: true }, { icon: 'planeRegion', label: '平面区域', on: true }],
    [{ icon: 'fluidPoint', label: '流体标记点', on: true }, { icon: 'monitor', label: '监控点', on: true }, { icon: 'cutRegion', label: '切割域', on: true }],
  ],
  [
    [{ icon: 'cone', label: '圆锥体' }, { icon: 'sphere', label: '球体' }, { icon: 'substrate', label: '基板' }],
    [{ icon: 'cover', label: '盖板' }, { icon: 'via', label: '过孔' }],
  ],
  [
    [{ icon: 'submodel', label: '子模型', on: true }, { icon: 'romGrey', label: '导入ICROM' }],
  ],
];

const Ribbon = () => (
  <section className="h-20 flex items-stretch py-[2px] bg-[#fafafa] border-y border-[#d9dadb] text-[11px] overflow-hidden">
    <button className="w-[85px] shrink-0 flex flex-col items-center gap-[6px] pt-[7px] pl-1 text-[#333]">
      <Icon name="createMode" className="w-[30px] h-[30px]" />
      <span className="whitespace-nowrap">点击创建模式</span>
    </button>
    {RIBBON.map((group, g) => (
      <div key={g} className="flex shrink-0 gap-[9px] pt-1 pl-[7px] pr-[5px] border-l border-[#b5b5b5] first-of-type:pr-[3px] last:border-r">
        {group.map((column, c) => (
          <div key={c} className="flex flex-col justify-center">
            {column.map(item => (
              <button
                key={item.label}
                disabled={!item.on}
                className="h-[25px] shrink-0 flex items-center gap-[3px] whitespace-nowrap text-[#333] disabled:text-[#808080]"
              >
                <Icon name={item.icon} />
                {item.label}
              </button>
            ))}
          </div>
        ))}
      </div>
    ))}
  </section>
);

// ---------------------------------------------------------------------------
// View toolbar
// ---------------------------------------------------------------------------

const Tool: React.FC<{ name: string; label: string }> = ({ name, label }) => (
  <button aria-label={label} className="w-7 h-6 shrink-0 flex items-center justify-center">
    <ToolIcon name={name} className="w-[21px] h-[21px]" />
  </button>
);

const Divider = () => <span className="h-5 mx-[3px] shrink-0 border-l border-dashed border-[#8f8f8f]" />;

const More: React.FC<{ className: string }> = ({ className }) => (
  <svg viewBox="0 0 10 14" className={`w-[10px] h-[14px] shrink-0 ${className}`} aria-hidden="true">
    <path d="M2 0H7L9 2V12L7 14H2Z" fill="#111" />
    <path d="M0 3 5 5 0 8ZM4 1H7L5 4ZM2 11 7 8 5 13Z" fill="#fff" />
  </svg>
);

const Spinner: React.FC<{ label: string; value: string; onChange: (v: string) => void }> = ({ label, value, onChange }) => (
  <label className="w-[74px] h-[19px] shrink-0 flex items-center border border-[#b4b8bc] rounded-xs bg-white">
    <input
      aria-label={label}
      value={value}
      onChange={e => onChange(e.target.value)}
      className="w-14 pl-[2px] text-[11px] text-[#333] outline-none"
    />
    <span className="flex flex-col ml-auto pr-[3px]">
      <Chevron className="rotate-180" />
      <Chevron />
    </span>
  </label>
);

const Select: React.FC<{ label: string; options: string[]; className: string }> = ({ label, options, className }) => (
  <span className={`relative flex items-center shrink-0 h-[19px] border border-[#b4b8bc] rounded-xs bg-white ${className}`}>
    <select aria-label={label} className="w-full h-full pl-[2px] appearance-none text-[11px] text-[#333] outline-none">
      {options.map(o => <option key={o}>{o}</option>)}
    </select>
    <Chevron className="absolute right-[3px] pointer-events-none" />
  </span>
);

const CheckBox: React.FC<{ label: string; checked: boolean; onChange: (v: boolean) => void }> = ({ label, checked, onChange }) => (
  <label className="flex items-center gap-[5px] whitespace-nowrap">
    <span className="relative flex">
      <input
        type="checkbox"
        checked={checked}
        onChange={e => onChange(e.target.checked)}
        className="w-[10px] h-[10px] appearance-none rounded-xs border border-[#b5b7b9] bg-[#d4d5d6] checked:border-[#4b5f6b] checked:bg-[#4b5f6b]"
      />
      {checked && (
        <svg viewBox="0 0 10 10" className="absolute inset-0 w-[10px] h-[10px] pointer-events-none" fill="none" stroke="#fff" strokeWidth="1.3">
          <path d="M2.4 5.2 4.4 7.4 7.8 2.6" />
        </svg>
      )}
    </span>
    {label}
  </label>
);

const ViewToolbar = () => {
  const [angle, setAngle] = useState('90');
  const [position, setPosition] = useState('104.5');
  const [project, setProject] = useState(true);
  const [showPlane, setShowPlane] = useState(false);

  return (
    <div className="h-7 flex items-center bg-white text-[11px] text-[#333] overflow-hidden" role="toolbar">
      <span className="h-5 ml-[2px] mr-1 shrink-0 border-l border-dashed border-[#8f8f8f]" />
      <Tool name="camera" label="截图" />
      <Divider />
      <Tool name="view" label="视图" />
      <Chevron />
      <Tool name="axes" label="坐标轴" />
      <Chevron className="mr-1" />
      <Tool name="triadBox" label="坐标" />
      <Tool name="eye" label="显示" />
      <Tool name="hide" label="隐藏" />
      <Tool name="fit" label="适应窗口" />
      <Tool name="zoomAll" label="全部缩放" />
      <Tool name="clip" label="剖切" />
      <Divider />
      <Tool name="zoomWindow" label="框选缩放" />
      <Tool name="select" label="选择" />
      <button className="flex items-center gap-[3px] px-[2px] whitespace-nowrap">
        全部
        <Chevron />
      </button>
      <Divider />
      <Tool name="extrude" label="拉伸" />
      <Tool name="alignLeft" label="对齐" />
      <Tool name="distance" label="间距" />
      <Tool name="check" label="检查" />
      <Divider />
      <Tool name="rotateLeft" label="左旋" />
      <Tool name="rotateRight" label="右旋" />
      <span className="flex gap-[2px] mx-[2px]">
        <Spinner label="角度" value={angle} onChange={setAngle} />
        <Select label="角度单位" options={['°', 'rad']} className="w-11" />
      </span>
      <Tool name="spinCw" label="顺时针" />
      <Tool name="spinCcw" label="逆时针" />
      <Divider />
      <Tool name="transform" label="变换" />
      <Tool name="pattern" label="阵列" />
      <More className="ml-[14px]" />
      <Divider />
      <Tool name="ruler" label="测量" />
      <More className="ml-px" />
      <Divider />
      <span className="whitespace-nowrap mx-[3px]">工作面法向</span>
      <Select label="工作面法向" options={['Y', 'X', 'Z']} className="w-[34px] ml-[2px]" />
      <span className="whitespace-nowrap ml-[7px] mr-1">位置</span>
      <input
        type="range"
        aria-label="位置"
        defaultValue="0"
        className="w-[76px] h-2 shrink-0 appearance-none bg-transparent [&::-webkit-slider-runnable-track]:h-[3px] [&::-webkit-slider-runnable-track]:bg-[#a5abb0] [&::-webkit-slider-thumb]:appearance-none [&::-webkit-slider-thumb]:w-[9px] [&::-webkit-slider-thumb]:h-[7px] [&::-webkit-slider-thumb]:-mt-[2px] [&::-webkit-slider-thumb]:bg-[#8dc5fb]"
      />
      <span className="flex gap-px ml-1">
        <Spinner label="位置数值" value={position} onChange={setPosition} />
        <Select label="长度单位" options={['mm', 'cm', 'm']} className="w-[46px]" />
      </span>
      <span className="flex gap-[11px] ml-2">
        <CheckBox label="网格投影工作面" checked={project} onChange={setProject} />
        <CheckBox label="显示工作面" checked={showPlane} onChange={setShowPlane} />
      </span>
      <span className="h-5 ml-1 mr-[5px] shrink-0 border-l border-dashed border-[#8f8f8f]" />
      <Tool name="shapes" label="几何" />
    </div>
  );
};

// ---------------------------------------------------------------------------
// Project tree
// ---------------------------------------------------------------------------

// One guide character per indent cell:
// ' ' empty, '|' line, 'T' branch, 'L' last branch, '-' collapse button
interface TreeRow {
  guides: string;
  icon: string;
  label: string;
  selected?: boolean;
}

const TREE: TreeRow[] = [
  { guides: '-', icon: 'contour', label: '芯片RJA00_嵌入式_加密' },
  { guides: ' -', icon: 'contour', label: '求解系统' },
  { guides: ' |L', icon: 'domain', label: '求解域' },
  { guides: ' -', icon: 'assembly', label: '根装配体' },
  { guides: '  -', icon: 'assembly', label: 'Component' },
  { guides: '  |T', icon: 'pcbColor', label: '电路板' },
  { guides: '  |T', icon: 'heatsinkSel', label: '散热器', selected: true },
  { guides: '  |T', icon: 'monitorGrey', label: '盖板-监控点y+' },
  { guides: '  |T', icon: 'monitorGrey', label: '盖板-监控点y-' },
  { guides: '  |T', icon: 'monitorGrey', label: '盖板-监控点z+' },
  { guides: '  |T', icon: 'monitorGrey', label: '盖板-监控点z-' },
  { guides: '  |T', icon: 'monitorGrey', label: '盖板-监控点x+' },
  { guides: '  |L', icon: 'monitorGrey', label: '盖板-监控点x-' },
  { guides: '  -', icon: 'rom', label: 'Embedded_BCIROM_Refine_ICROM' },
  { guides: '   -', icon: 'assembly', label: 'Faces' },
  { guides: '   |-', icon: 'assembly', label: 'WallThermal_Ambient' },
  { guides: '   ||L', icon: 'plane', label: 'ICROMFace1' },
  { guides: '   |-', icon: 'assembly', label: 'WallThermal1_Ambient' },
  { guides: '   ||L', icon: 'plane', label: 'ICROMFace2' },
  { guides: '   |-', icon: 'assembly', label: 'WallThermal2_Ambient' },
  { guides: '   ||L', icon: 'plane', label: 'ICROMFace3' },
  { guides: '   |-', icon: 'assembly', label: 'WallThermal3_Ambient' },
  { guides: '   ||L', icon: 'plane', label: 'ICROMFace4' },
  { guides: '   |-', icon: 'assembly', label: 'WallThermal4_Ambient' },
  { guides: '   ||L', icon: 'plane', label: 'ICROMFace5' },
  { guides: '   |-', icon: 'assembly', label: 'WallThermal5_Ambient' },
  { guides: '   | L', icon: 'plane', label: 'ICROMFace6' },
  { guides: '   -', icon: 'assembly', label: 'Sources' },
  { guides: '   |L', icon: 'sourceFaceColor', label: '体源项' },
  { guides: '   L', icon: 'assembly', label: 'Probes' },
];

const GUIDE_PATHS: Record<string, string> = {
  '|': 'M9.5 0V18',
  T: 'M9.5 0V18M9.5 9.5H19',
  L: 'M9.5 0V7Q9.5 9.5 12 9.5H19',
};

const Guide: React.FC<{ kind: string }> = ({ kind }) => {
  if (kind === '-') {
    return (
      <button aria-label="折叠" className="w-[19px] h-[18px] shrink-0 flex items-center justify-center">
        <svg viewBox="0 0 11 11" className="w-[11px] h-[11px]" fill="#fff">
          <circle cx="5.5" cy="5.5" r="4.8" stroke="#b0b0b0" />
          <path d="M3 5.5H8" stroke="#444" />
        </svg>
      </button>
    );
  }
  return (
    <svg viewBox="0 0 19 18" className="w-[19px] h-[18px] shrink-0" fill="none" stroke="#e2e2e2" aria-hidden="true">
      <path d={GUIDE_PATHS[kind]} />
    </svg>
  );
};

// the third entry marks a button that opens a new group
const TREE_TOOLS: [string, string, boolean][] = [
  ['up', '上移', false],
  ['down', '下移', false],
  ['home', '主页', true],
  ['treeUp', '上级', false],
  ['treePick', '拾取', false],
  ['collapse', '全部折叠', true],
  ['expand', '全部展开', false],
  ['properties', '属性', true],
];

const ProjectTree = () => (
  <div className="flex-1 min-w-0 flex flex-col pb-1">
    <div className="h-[26px] flex items-center gap-[3px] pl-px bg-white">
      {TREE_TOOLS.map(([name, label, opensGroup]) => (
        <button
          key={name}
          aria-label={label}
          className={`h-5 flex items-center justify-center ${opensGroup ? 'w-6 border-l border-[#d4d4d4]' : 'w-[21px]'}`}
        >
          <ToolIcon name={name} className="w-[18px] h-[18px]" />
        </button>
      ))}
    </div>
    <div className="flex-1 min-h-0 border border-[#b0b4b8] bg-white overflow-hidden">
      <div className="h-[22px] flex items-center justify-between pl-1 pr-[6px] bg-[#adb2b6] border-b border-[#999ea2] text-[11px] text-[#222]">
        工程
        <svg viewBox="0 0 12 12" className="w-3 h-3" fill="none" stroke="#d5d8da" aria-hidden="true">
          <path d="M6 1 11 11H1Z" />
        </svg>
      </div>
      <ul className="text-[11px] text-[#2b2b2b]">
        {TREE.map(row => (
          <li key={row.label} className="h-[18px] flex items-center">
            {row.guides.split('').map((kind, i) => <Guide key={i} kind={kind} />)}
            <span className={`flex-1 h-[18px] flex items-center pl-[2px] gap-1 whitespace-nowrap ${row.selected ? 'bg-[#90c8ff]' : ''}`}>
              <Icon name={row.icon} />
              {row.label}
            </span>
          </li>
        ))}
      </ul>
    </div>
  </div>
);

const PALETTE: string[][] = [
  ['createMode', 'assembly', 'cuboid', 'plane', 'hole', 'prism', 'tetra', 'cylinder', 'slope', 'pipe', 'route', 'enclosure'],
  ['pcb', 'board', 'device', 'die', 'network', 'networkNode', 'networkBody', 'networkFace'],
  ['sourceBody', 'sourceFace'],
  ['heatsink', 'vaporChamber', 'vaporContact', 'tec', 'axialFan', 'planeFan', 'centrifugal', 'blower', 'opening', 'aircon', 'outlet', 'inlet'],
  ['resistance', 'planeResistance', 'perforated'],
  ['fluidRegion', 'fluidPoint', 'volumeRegion', 'planeRegion', 'cutRegion', 'monitor'],
  ['cone', 'sphere', 'substrate', 'cover', 'via', 'romGrey'],
];

const Palette = () => (
  <div className="w-[45px] shrink-0 flex flex-col bg-white">
    {PALETTE.map((names, i) => (
      <div
        key={i}
        className="grid grid-cols-[20px_1fr] auto-rows-fr basis-0 border-b border-[#a9a9a9] last:border-b-0"
        style={{ flexGrow: Math.ceil(names.length / 2) }}
      >
        {names.map(name => (
          <button key={name} aria-label={name} className="flex items-center justify-center">
            <Icon name={name} />
          </button>
        ))}
      </div>
    ))}
  </div>
);

const LeftDock = () => (
  <aside className="w-[400px] shrink-0 flex flex-col bg-[#ebedef] border-t border-r border-[#b9bcc0]">
    <div className="h-5 flex items-center pl-1 pr-[6px] text-[11px] text-[#5a6b7c]">
      <span className="flex-1">项目树</span>
      <button aria-label="浮动" className="w-[22px] flex justify-center">
        <svg viewBox="0 0 10 8" className="w-[10px] h-2" fill="#2e4257"><path d="M0 0 5 4V0L10 4 5 8V4L0 8Z" /></svg>
      </button>
      <button aria-label="关闭面板" className="w-[22px] flex justify-center">
        <svg viewBox="0 0 8 8" className="w-2 h-2" stroke="#2e4257" strokeWidth="1.6"><path d="M1 1 7 7M7 1 1 7" /></svg>
      </button>
    </div>
    <div className="flex-1 min-h-0 flex">
      <ProjectTree />
      <Palette />
      <span className="w-[5px] shrink-0" />
    </div>
  </aside>
);

// ---------------------------------------------------------------------------
// 3D view
// ---------------------------------------------------------------------------

const FIN_COUNT = 20;
const FIN_PITCH = 32.1;
const FIN_THICKNESS = 9.8;

const finPath = (dy: number) =>
  `M194.5 ${8.8 + dy} L231 ${5.7 + dy} L718 ${28.7 + dy} L681 ${32.2 + dy} Z`;

const fins = Array.from({ length: FIN_COUNT }, (_, i) => i * FIN_PITCH);

const Viewport = () => (
  <svg
    viewBox="0 0 1040 657"
    preserveAspectRatio="xMidYMid slice"
    className="flex-1 min-h-0 w-full border-t border-[#c4c4c4] bg-linear-to-b from-[#d5d5d5] to-white"
    role="img"
    aria-label="三维视图"
  >
    <g fill="none" strokeWidth="1">
      <g stroke="#5fae50">
        <path d="M260.5 4V622.5M273.5 3V621.5M746.5 26V646M760 25.5V645" />
        <path d="M260.5 3.5 273.5 2.5 760.5 25 746.5 26Z" />
        <path d="M260.5 622.8 273.5 621.8 760.5 644.8 746.5 645.8Z" />
      </g>
      <g stroke="#ff1414">
        {fins.map(dy => (
          <path key={dy} d={`${finPath(dy)} ${finPath(dy + FIN_THICKNESS)}`} />
        ))}
        <path d="M194.5 9V628.5M231.5 6V625M239.5 5V625M680.5 32V651.5M717.5 29V648.5M725.5 28V648.5" />
        <path d="M231 5.4 239.5 4.6 725.5 28 718 28.6ZM231 625 239.5 624.4 725.5 648 718 648.6Z" />
      </g>
      <g stroke="#9494f6">
        <path d="M371 179V464M392.5 178V463M594.5 189.5V473.5M615 188.5V473" />
        <path d="M371 179 392.5 177.8 615.5 188 594.5 189.4ZM371 464 392.5 462.8 615.5 473 594.5 474Z" />
      </g>
      <g stroke="#b86a2c">
        <path d="M442 258.5 543 263.5V392.5L442 387.5Z" />
        <path d="M472 327.5 493 325.5M472 326V329" />
      </g>
    </g>
    <g fill="none" stroke="#111">
      <path d="M237 384 239.5 378 242 384" />
      <path d="M228 622.5 222 625.5 227 629M222 625.5H228M428 631.5 434 634 428 637.5M430 634H434" />
    </g>

    <g fill="#111" fontFamily="'Liberation Mono', monospace" fontSize="11">
      <text x="251" y="363">Yo</text>
      <text x="217" y="640">Zo</text>
      <text x="445" y="647">Xo</text>
    </g>

    <g>
      <path d="M83 571.5V529H78L86 516.5 94 529H89V571.5Z" fill="#0a9a35" />
      <path d="M82 568.5 61 569.5 56 564 55 562.5H51L44 572.5 50.5 582H55L61 575.5 82 573.5Z" fill="#1a1ae0" />
      <path d="M90 568.5 121 569.5V563.5L125 562.5 135.5 572.5 125 582 121 581V575.5L90 573.5Z" fill="#e01a1a" />
      <rect x="81.5" y="567" width="8.5" height="6.5" fill="#cfcfcf" />
      <g fill="#333" fontFamily="'Liberation Mono', monospace" fontSize="8">
        <text x="87" y="510">Y</text>
        <text x="38" y="574">Z</text>
        <text x="145" y="573">X</text>
      </g>
    </g>

    <g>
      <path d="M921 575 944 573V577.5L921 579.5Z" fill="#444" />
      <path d="M945 567 951 568 958 573.5 951 580 945 581.5Z" fill="#808080" />
      <path d="M951 568 958 573.5 951 580Z" fill="#555" />
      <text x="959" y="573" fill="#444" fontFamily="'Liberation Mono', monospace" fontSize="8">G</text>
    </g>
  </svg>
);

// ---------------------------------------------------------------------------

const App: React.FC = () => (
  <div className="h-screen flex flex-col overflow-hidden bg-[#ebedef] font-['Noto_Sans','Noto_Sans_CJK_SC',sans-serif] leading-4">
    <TitleBar />
    <MenuTabs />
    <Ribbon />
    <ViewToolbar />
    <main className="flex-1 min-h-0 flex">
      <LeftDock />
      <section className="flex-1 min-w-0 flex flex-col">
        <Viewport />
        <div className="h-4 shrink-0 flex items-stretch bg-[#e6e8eb] border-b border-[#b5b8bc]">
          <button className="flex items-center gap-2 pr-[5px] bg-white border-r border-[#b5b8bc] text-[11px] text-[#222]">
            <ToolIcon name="app" className="w-[14px] h-[14px]" />
            芯片RJA00_嵌入式_加密-三维*
          </button>
        </div>
      </section>
    </main>
    <footer className="h-[22px] shrink-0 flex items-center justify-between pt-1 pl-[11px] pr-px border-t border-[#b5b8bc] bg-[#ebedef] text-[11px]">
      <span className="text-[#858585]">Selected objects : 1</span>
      <span className="text-[#333]">80.399 mm x 50.815 mm</span>
    </footer>
  </div>
);

export default App;
